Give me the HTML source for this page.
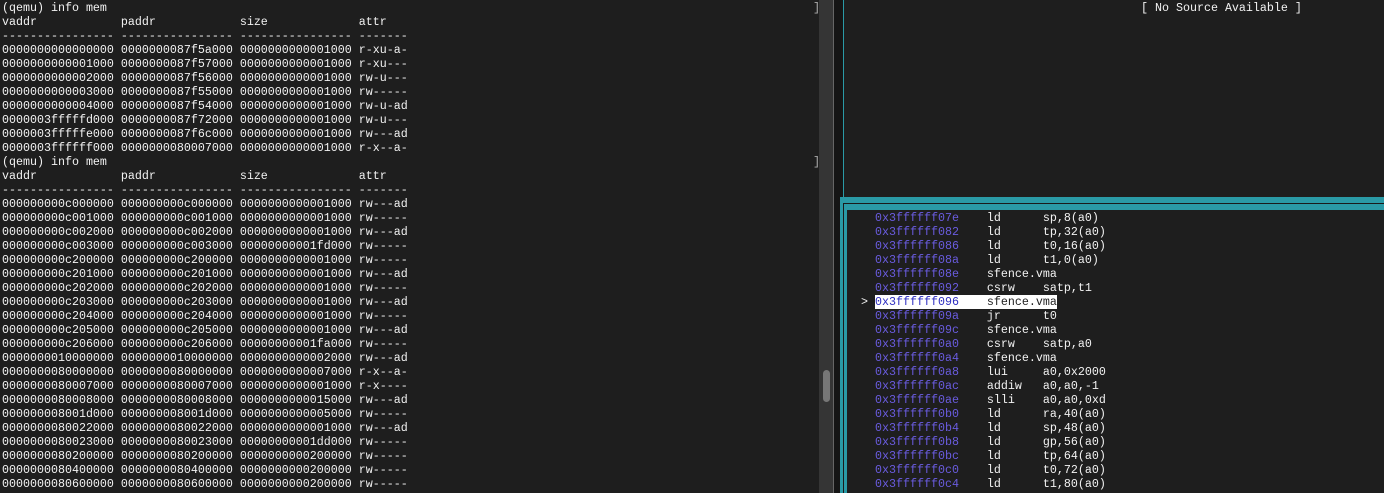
<!DOCTYPE html>
<html><head><style>
body{margin:0;width:1384px;height:493px;background:#1e1e1e;overflow:hidden;position:relative;font-family:"Liberation Mono",monospace;font-size:11.67px;}
pre{margin:0;font:inherit;line-height:14px;white-space:pre;position:absolute;}
#l{left:2px;top:1px;color:#f2f2f2;}
.br{position:absolute;left:813px;color:#aaa;font-size:12px;}
#sb{position:absolute;left:819px;top:0;width:14px;height:493px;background:#353535;}
#thumb{position:absolute;left:823px;top:370px;width:7px;height:32px;background:#777;border-radius:4px;}
#sep{position:absolute;left:833px;top:0;width:1px;height:493px;background:#666;}
#dk{position:absolute;left:834px;top:0;width:9px;height:493px;background:#151515;}
#tl{position:absolute;left:843px;top:0;width:1px;height:200px;background:#2a9aa6;}
#box{position:absolute;left:840px;top:197px;width:544px;height:296px;background:#2a9aa6;}
#box2{position:absolute;left:843px;top:203px;width:541px;height:290px;background:#1a1a1a;}
#box3{position:absolute;left:844px;top:204px;width:540px;height:289px;background:#2a9aa6;}
#in{position:absolute;left:847px;top:210px;width:537px;height:283px;background:#1e1e1e;}
#r{left:861px;top:211px;color:#f2f2f2;}
.a{color:#6a5ce0;}
.h{background:#fff;color:#222;}
.h .a{color:#2c2cc0;}
#ns{left:1141px;top:1px;color:#f2f2f2;}
</style></head><body>
<pre id="l">(qemu) info mem
vaddr            paddr            size             attr
---------------- ---------------- ---------------- -------
0000000000000000 0000000087f5a000 0000000000001000 r-xu-a-
0000000000001000 0000000087f57000 0000000000001000 r-xu---
0000000000002000 0000000087f56000 0000000000001000 rw-u---
0000000000003000 0000000087f55000 0000000000001000 rw-----
0000000000004000 0000000087f54000 0000000000001000 rw-u-ad
0000003fffffd000 0000000087f72000 0000000000001000 rw-u---
0000003fffffe000 0000000087f6c000 0000000000001000 rw---ad
0000003ffffff000 0000000080007000 0000000000001000 r-x--a-
(qemu) info mem
vaddr            paddr            size             attr
---------------- ---------------- ---------------- -------
000000000c000000 000000000c000000 0000000000001000 rw---ad
000000000c001000 000000000c001000 0000000000001000 rw-----
000000000c002000 000000000c002000 0000000000001000 rw---ad
000000000c003000 000000000c003000 00000000001fd000 rw-----
000000000c200000 000000000c200000 0000000000001000 rw-----
000000000c201000 000000000c201000 0000000000001000 rw---ad
000000000c202000 000000000c202000 0000000000001000 rw-----
000000000c203000 000000000c203000 0000000000001000 rw---ad
000000000c204000 000000000c204000 0000000000001000 rw-----
000000000c205000 000000000c205000 0000000000001000 rw---ad
000000000c206000 000000000c206000 00000000001fa000 rw-----
0000000010000000 0000000010000000 0000000000002000 rw---ad
0000000080000000 0000000080000000 0000000000007000 r-x--a-
0000000080007000 0000000080007000 0000000000001000 r-x----
0000000080008000 0000000080008000 0000000000015000 rw---ad
000000008001d000 000000008001d000 0000000000005000 rw-----
0000000080022000 0000000080022000 0000000000001000 rw---ad
0000000080023000 0000000080023000 00000000001dd000 rw-----
0000000080200000 0000000080200000 0000000000200000 rw-----
0000000080400000 0000000080400000 0000000000200000 rw-----
0000000080600000 0000000080600000 0000000000200000 rw-----</pre>
<span class="br" style="top:1px">]</span>
<span class="br" style="top:155px">]</span>
<div id="sb"></div><div id="thumb"></div><div id="sep"></div><div id="dk"></div><div id="tl"></div>
<pre id="ns">[ No Source Available ]</pre>
<div id="box"></div><div id="box2"></div><div id="box3"></div><div id="in"></div>
<pre id="r">  <span class="a">0x3ffffff07e</span>    ld      sp,8(a0)
  <span class="a">0x3ffffff082</span>    ld      tp,32(a0)
  <span class="a">0x3ffffff086</span>    ld      t0,16(a0)
  <span class="a">0x3ffffff08a</span>    ld      t1,0(a0)
  <span class="a">0x3ffffff08e</span>    sfence.vma
  <span class="a">0x3ffffff092</span>    csrw    satp,t1
> <span class="h"><span class="a">0x3ffffff096</span>    sfence.vma</span>
  <span class="a">0x3ffffff09a</span>    jr      t0
  <span class="a">0x3ffffff09c</span>    sfence.vma
  <span class="a">0x3ffffff0a0</span>    csrw    satp,a0
  <span class="a">0x3ffffff0a4</span>    sfence.vma
  <span class="a">0x3ffffff0a8</span>    lui     a0,0x2000
  <span class="a">0x3ffffff0ac</span>    addiw   a0,a0,-1
  <span class="a">0x3ffffff0ae</span>    slli    a0,a0,0xd
  <span class="a">0x3ffffff0b0</span>    ld      ra,40(a0)
  <span class="a">0x3ffffff0b4</span>    ld      sp,48(a0)
  <span class="a">0x3ffffff0b8</span>    ld      gp,56(a0)
  <span class="a">0x3ffffff0bc</span>    ld      tp,64(a0)
  <span class="a">0x3ffffff0c0</span>    ld      t0,72(a0)
  <span class="a">0x3ffffff0c4</span>    ld      t1,80(a0)</pre>
</body></html>
